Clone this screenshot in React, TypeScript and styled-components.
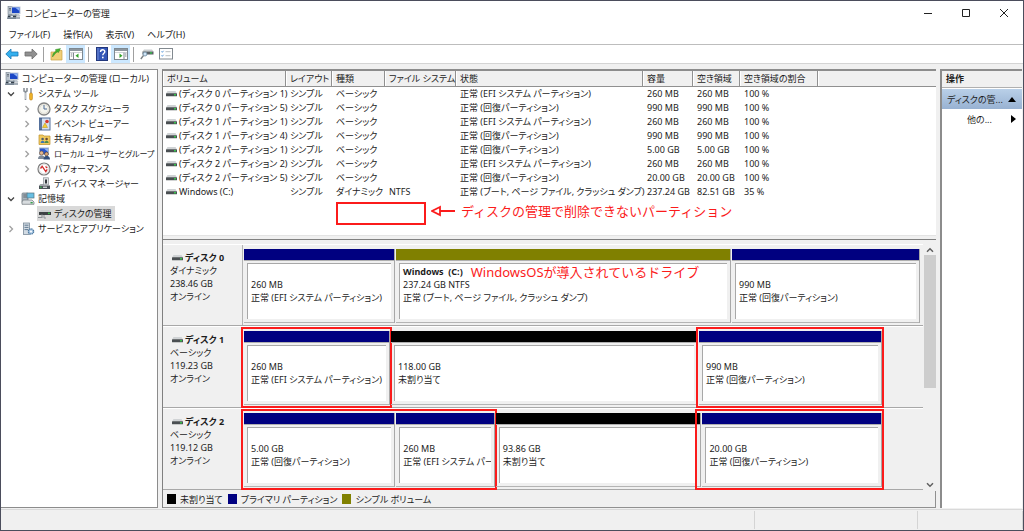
import React from "react";
import styled, { createGlobalStyle, css } from "styled-components";

const GlobalStyle = createGlobalStyle`
  *, *::before, *::after { box-sizing: border-box; }
  body {
    margin: 0;
    background: #f0f0f0;
    color: #1c1c1c;
    font-family: "Noto Sans", "Noto Sans CJK JP", sans-serif;
    font-size: 9px;
    line-height: 13px;
    font-feature-settings: "palt", "kern";
  }
  button { font: inherit; font-feature-settings: inherit; color: inherit; background: none; border: 0; padding: 0; margin: 0; }
  svg { display: block; flex: none; }
`;

/* ---------- window frame ---------- */

const Window = styled.main`
  min-height: 100vh;
  display: flex;
  flex-direction: column;
  border: 1px solid #4b4d5c;
  background: #f0f0f0;
`;

const TitleBar = styled.header`
  display: flex;
  align-items: center;
  gap: 4px;
  height: 24px;
  padding-left: 6px;
  background: #fff;
`;

const Title = styled.h1`
  flex: 1;
  margin: 0;
  font-size: 9px;
  font-weight: 400;
`;

const CaptionButton = styled.button`
  width: 38px;
  height: 24px;
  display: grid;
  place-items: center;
`;

const CaptionGroup = styled.div`
  display: flex;
`;

const MenuBar = styled.nav`
  display: flex;
  align-items: center;
  gap: 13px;
  height: 20px;
  padding-left: 8px;
  background: #fff;
  border-bottom: 1px solid #bdbdbd;
`;

const Toolbar = styled.div`
  display: flex;
  align-items: center;
  height: 19px;
  padding-left: 1px;
  background: #fff;
  border-bottom: 1px solid #d4d4d4;
`;

const ToolButton = styled.button<{ $active?: boolean }>`
  width: 19px;
  height: 18px;
  display: grid;
  place-items: center;
  background: ${(p) => (p.$active ? "#cce8ff" : "transparent")};
`;

const ToolSeparator = styled.span`
  width: 1px;
  height: 15px;
  margin: 0 3px;
  background: #a0a0a0;
`;

const Body = styled.div`
  flex: 1;
  display: grid;
  grid-template-columns: 157px minmax(0, 1fr) 82px;
  column-gap: 4px;
  padding: 5px 1px 0 0;
`;

const StatusBar = styled.footer`
  display: flex;
  height: 21px;
  margin-top: 1px;
  border-top: 1px solid #d9d9d9;
`;

const StatusCell = styled.span<{ $width?: number }>`
  flex: ${(p) => (p.$width ? `0 0 ${p.$width}px` : "1")};
  margin: 1px 0;
  border-right: 1px solid #d4d4d4;
`;

/* ---------- tree ---------- */

const TreePanel = styled.aside`
  background: #fff;
  border: solid #8c8c8c;
  border-width: 1px 1px 1px 0;
  padding-top: 1px;
`;

const TreeList = styled.ul`
  margin: 0;
  padding: 0;
  list-style: none;
`;

const TreeRow = styled.li<{ $level: number }>`
  display: flex;
  align-items: center;
  height: 15px;
  padding-left: ${(p) => (p.$level === 0 ? 4 : (p.$level - 1) * 16 + 4)}px;
  white-space: nowrap;
`;

const Toggle = styled.button`
  flex: none;
  width: 16px;
  height: 15px;
  display: flex;
  align-items: center;
  padding-left: 2px;
`;

const TreeLabel = styled.span<{ $selected?: boolean; $compact?: boolean }>`
  display: flex;
  align-items: center;
  gap: 3px;
  height: 15px;
  padding-right: 3px;
  font-size: ${(p) => (p.$compact ? 8 : 9)}px;
  background: ${(p) => (p.$selected ? "#d9d9d9" : "transparent")};
`;

const IconSlot = styled.span`
  flex: none;
  width: 14px;
  display: grid;
  place-items: center;
`;

/* ---------- volume list ---------- */

const Center = styled.section`
  display: flex;
  flex-direction: column;
  border-left: 1px solid #808080;
  border-top: 2px solid #8c8c8c;
  min-width: 0;
`;

const VolumePane = styled.div`
  flex: 1;
  background: #fff;
  border-bottom: 1px solid #e3e3e3;
`;

const Splitter = styled.div`
  height: 4px;
  border-bottom: 1px solid #808080;
`;

const VolumeTable = styled.table`
  width: 100%;
  table-layout: fixed;
  border-collapse: separate;
  border-spacing: 0;
`;

const Th = styled.th`
  height: 16px;
  padding: 0 0 0 4px;
  background: #f0f0f0;
  border-right: 1px solid #909090;
  border-bottom: 1px solid #909090;
  box-shadow: inset 1px 0 #fff;
  font-weight: 400;
  text-align: left;
  white-space: nowrap;
  &:last-child { border-right: 0; }
`;

const Td = styled.td`
  height: 14px;
  padding: 0 0 0 4px;
  line-height: 14px;
  white-space: nowrap;
  &:first-child { padding-left: 3px; }
`;

const VolumeName = styled.span`
  display: flex;
  align-items: center;
  gap: 2px;
`;

const NoteRow = styled.div`
  display: flex;
  align-items: flex-start;
  gap: 5px;
  padding: 3px 0 0 173px;
`;

const noteText = css`
  color: #fb1b1b;
  font-size: 13px;
  line-height: 18px;
  font-weight: 400;
  font-feature-settings: normal;
  white-space: nowrap;
`;

const Note = styled.span`
  ${noteText}
`;

const EmptyMark = styled.span`
  width: 90px;
  height: 23px;
  border: 2px solid #fb1b1b;
`;

/* ---------- disk map ---------- */

const DiskPane = styled.div`
  display: flex;
  padding: 4px 0 1px;
`;

const DiskList = styled.div`
  flex: 1;
  min-width: 0;
`;

const DiskRow = styled.div`
  display: flex;
  height: 82px;
  border-top: 1px solid #fff;
  border-bottom: 1px solid #a8a8a8;
`;

const DiskInfo = styled.div`
  width: 80px;
  padding: 6px 0 0 7px;
  border-right: 1px solid #b4b4b4;
`;

const DiskName = styled.div`
  display: flex;
  align-items: center;
  gap: 2px;
  height: 13px;
  padding-left: 2px;
  font-weight: 700;
`;

const Partitions = styled.div<{ $tail?: boolean }>`
  flex: 1;
  display: flex;
  gap: 2px;
  min-width: 0;
  padding: 4px ${(p) => (p.$tail ? 42 : 4)}px 2px 1px;
`;

const PartitionGroup = styled.div<{ $grow: number }>`
  position: relative;
  flex: ${(p) => p.$grow} 1 0;
  display: flex;
  gap: 2px;
  min-width: 0;
`;

const Mark = styled.span<{ $reach: number }>`
  position: absolute;
  inset: -4px -3px -3px -${(p) => p.$reach}px;
  border: 2px solid #fb1b1b;
  pointer-events: none;
`;

const PartitionBox = styled.div<{ $grow: number }>`
  flex: ${(p) => p.$grow} 1 0;
  display: flex;
  flex-direction: column;
  gap: 2px;
  min-width: 0;
  border-bottom: 1px solid #b4b4b4;
  box-shadow: 1px 0 #a8a8a8;
  padding-bottom: 3px;
`;

const PartitionBar = styled.div<{ $color: string }>`
  height: 12px;
  background: ${(p) => p.$color};
  border-bottom: 1px solid #b0b0b0;
`;

const PartitionBody = styled.div`
  flex: 1;
  margin: 0 3px;
  padding: 1px 0 0 3px;
  background: #fff;
  border-top: 1px solid #a8a8a8;
  border-left: 1px solid #a8a8a8;
  overflow: hidden;
  white-space: nowrap;
`;

const PartitionName = styled.div`
  display: flex;
  align-items: center;
  gap: 8px;
  height: 13px;
  font-weight: 700;
  white-space: pre;
`;

const ScrollBar = styled.div`
  width: 13px;
  display: flex;
  flex-direction: column;
  align-items: center;
`;

const ScrollButton = styled.button`
  width: 12px;
  height: 11px;
  display: grid;
  place-items: center;
`;

const ScrollThumb = styled.div`
  width: 12px;
  height: 54%;
  margin-bottom: auto;
  background: #cdcdcd;
`;

const Legend = styled.div`
  display: flex;
  align-items: center;
  gap: 5px;
  height: 17px;
  padding-left: 4px;
  border-right: 1px solid #909090;
  border-bottom: 1px solid #909090;
`;

const LegendItem = styled.span`
  display: flex;
  align-items: center;
  gap: 4px;
`;

const Swatch = styled.span<{ $color: string }>`
  width: 9px;
  height: 10px;
  background: ${(p) => p.$color};
`;

/* ---------- actions ---------- */

const ActionPanel = styled.aside`
  background: #fff;
  border-left: 2px solid #8c8c8c;
  border-top: 2px solid #8c8c8c;
`;

const ActionHeading = styled.h2`
  margin: 0 0 1px;
  height: 17px;
  padding-left: 4px;
  background: #f0f0f0;
  border-bottom: 1px solid #b0b0b0;
  font-size: 9px;
  line-height: 16px;
  font-weight: 700;
`;

const ActionButton = styled.button<{ $main?: boolean }>`
  width: 100%;
  height: 20px;
  display: flex;
  align-items: center;
  justify-content: space-between;
  padding: 0 6px 0 ${(p) => (p.$main ? 5 : 25)}px;
  background: ${(p) => (p.$main ? "linear-gradient(#b9d0e8, #98b2d2)" : "transparent")};
`;

/* ---------- icons ---------- */

const ComputerIcon = () => (
  <svg width="14" height="14" viewBox="0 0 14 14">
    <rect x="1" y="0.5" width="4" height="8" fill="#b9c2cc" stroke="#77828e" strokeWidth=".6" />
    <path d="M2 2.5h2M2 4h2" stroke="#48525d" strokeWidth=".7" />
    <rect x="4.5" y="1" width="8.5" height="6.5" fill="#1c47c6" stroke="#c3ccd8" />
    <path d="M8 1.5h4.5V5z" fill="#8fb4f4" />
    <path d="M8 8h4l1.500 2H8z" fill="#c0c8d0" />
    <path d="M1 8.500h8.500v4.500H0z" fill="#7a8794" />
    <path d="M1 10.500h8" stroke="#2d3742" strokeWidth=".9" />
    <path d="M9 10.500h4v2.500H9z" fill="#a4adb6" />
    <path d="M3.500 9.800h2.500v1.500H3.500z" fill="#e5edf3" />
  </svg>
);

const DriveIcon = () => (
  <svg width="11" height="6" viewBox="0 0 11 6">
    <path d="M1.500 0h8l1.500 2.500H0z" fill="#d0d3d5" />
    <rect y="2.2" width="11" height="3" rx=".5" fill="#4a4f52" />
    <rect x="8" y="3" width="2" height="1.500" fill="#37c24b" />
  </svg>
);

const ToolsIcon = () => (
  <svg width="12" height="14" viewBox="0 0 12 14">
    <path d="M2 1v3l1.5 1L5 4V1M3.5 5v8" fill="none" stroke="#8b9299" strokeWidth="1.6" />
    <path d="M3.5 6v6" stroke="#dfe3e6" strokeWidth=".6" />
    <path d="M9 1v5" stroke="#6f777e" strokeWidth="1.2" />
    <rect x="7.6" y="6" width="2.8" height="7" rx="1.2" fill="#f0b429" stroke="#b87c12" strokeWidth=".6" />
  </svg>
);

const ClockIcon = () => (
  <svg width="14" height="14" viewBox="0 0 14 14">
    <circle cx="7" cy="7" r="6" fill="#f4f4ee" stroke="#858585" strokeWidth="1.3" />
    <circle cx="7" cy="7" r="4.4" fill="none" stroke="#d4d0c4" strokeWidth=".6" />
    <path d="M7 3v4h3" fill="none" stroke="#4c6a94" strokeWidth="1" />
  </svg>
);

const EventIcon = () => (
  <svg width="13" height="14" viewBox="0 0 13 14">
    <rect x="1.5" y="1" width="10.5" height="12" fill="#d5e0f0" stroke="#54709c" />
    <path d="M3 1v12" stroke="#2f4a78" strokeWidth="1.4" />
    <path d="M4.5 10.500 7 6l2.5 4.5z" fill="#f8cf32" stroke="#b98e11" strokeWidth=".5" />
    <circle cx="9" cy="4.500" r="1.8" fill="#d8372b" />
  </svg>
);

const SharedIcon = () => (
  <svg width="13" height="12" viewBox="0 0 13 12">
    <path d="M1 2h4l1 1h6v8.5H1z" fill="#f0ca5e" stroke="#bb8f2c" strokeWidth=".7" />
    <circle cx="4.6" cy="6" r="1.3" fill="#4c5c6e" />
    <path d="M2.6 10c0-3 4-3 4 0z" fill="#3f78b4" />
    <circle cx="8.6" cy="6" r="1.3" fill="#6b4b32" />
    <path d="M6.6 10c0-3 4-3 4 0z" fill="#4d8b4f" />
  </svg>
);

const UsersIcon = () => (
  <svg width="14" height="13" viewBox="0 0 14 13">
    <rect x="2.5" y="1" width="9" height="6.5" fill="#2855cb" stroke="#aab6c6" />
    <path d="M7 1.5h4V5z" fill="#8fb4f4" />
    <circle cx="4.5" cy="6" r="2" fill="#e4b88d" stroke="#5a4030" strokeWidth=".5" />
    <path d="M1 12c0-5 7-5 7 0z" fill="#7d8998" />
    <circle cx="9.5" cy="7" r="1.9" fill="#dca878" stroke="#37271d" strokeWidth=".5" />
    <path d="M6.5 12.6c0-5 6.5-5 6.5 0z" fill="#34507b" />
  </svg>
);

const PerformanceIcon = () => (
  <svg width="14" height="14" viewBox="0 0 14 14">
    <circle cx="7" cy="7" r="6" fill="#fff" stroke="#7c7c7c" strokeWidth="1.2" />
    <circle cx="7" cy="7" r="4.7" fill="none" stroke="#d3d3d3" strokeWidth=".7" />
    <path d="M3.500 6.500 5.200 4.300 8.800 9.500l1.400-2.200M8.500 4.500l1.800 1.500" fill="none" stroke="#d42a2a" strokeWidth="1.3" />
  </svg>
);

const DeviceIcon = () => (
  <svg width="13" height="13" viewBox="0 0 13 13">
    <rect x="5.5" y=".8" width="5" height="7" fill="#e1e4e6" stroke="#8a9095" strokeWidth=".7" />
    <rect x="7" y="2.5" width="2" height="4" fill="#34393d" />
    <path d="M1 8.5h11v3.5H1z" fill="#4c5358" />
    <path d="M1 8.5 2.5 7H5v1.5z" fill="#9ba2a7" />
    <rect x="5" y="9.6" width="4" height="1.3" fill="#d9dcde" />
    <rect x="2" y="9.6" width="1.6" height="1.2" fill="#37c24b" />
  </svg>
);

const StorageIcon = () => (
  <svg width="14" height="13" viewBox="0 0 14 13">
    <rect x="1" y="1" width="6" height="10" rx="1" fill="#a9b4bd" stroke="#69747d" strokeWidth=".7" />
    <path d="M2.3 3h3.4M2.3 5h3.4" stroke="#4c565e" strokeWidth=".8" />
    <rect x="6" y="1" width="7" height="5" fill="#68bfe3" stroke="#54727f" strokeWidth=".7" />
    <path d="M2 8h9l2 2v2.3H1V10z" fill="#d8dcdf" stroke="#6f767b" strokeWidth=".7" />
    <rect x="9.5" y="10" width="2.2" height="1.4" fill="#37a24b" />
  </svg>
);

const DiskManageIcon = () => (
  <svg width="13" height="10" viewBox="0 0 13 10">
    <path d="M3 1h8l2 2H1z" fill="#c9cdcf" />
    <rect x="1" y="3" width="12" height="3" fill="#3c4144" />
    <rect x="10" y="3.6" width="1.8" height="1.5" fill="#37c24b" />
    <path d="M0 8.5h4V5.5" fill="none" stroke="#8b9196" strokeWidth="1.2" />
    <path d="M6 6v3h2" fill="none" stroke="#8b9196" strokeWidth="1" />
  </svg>
);

const ServicesIcon = () => (
  <svg width="13" height="14" viewBox="0 0 13 14">
    <rect x="1.5" y="1" width="6" height="11.5" fill="#d2dbe3" stroke="#7a8b9a" strokeWidth=".8" />
    <path d="M2.5 3.2h4M2.5 5.4h4M2.5 7.6h4" stroke="#58728a" strokeWidth=".9" />
    <circle cx="9" cy="9.5" r="2.7" fill="#a5c4e2" stroke="#4b789f" strokeWidth="1.2" strokeDasharray="1.4 .7" />
    <circle cx="9" cy="9.5" r="1" fill="#fff" />
  </svg>
);

const Arrow = ({ back }: { back?: boolean }) => (
  <svg width="14" height="12" viewBox="0 0 14 12">
    <path
      d={back ? "M.8 6 6 1v3h7v4H6v3z" : "M13.2 6 8 1v3H1v4h7v3z"}
      fill={back ? "#35b0ee" : "#909090"}
      stroke={back ? "#1978b8" : "#6c6c6c"}
      strokeWidth=".8"
    />
  </svg>
);

const FolderUpIcon = () => (
  <svg width="13" height="14" viewBox="0 0 13 14">
    <path d="M1 5h4l1-1.500h6V13H1z" fill="#f1cf78" stroke="#c9a043" strokeWidth=".7" />
    <path d="M2.500 10c0-3 1-5 3.500-5.500L5.500 2.500l5-1-2 4L7.300 5C5 6 4.500 8 2.500 10z" fill="#47b430" stroke="#2c7d1c" strokeWidth=".4" />
  </svg>
);

const PaneIcon = ({ right }: { right?: boolean }) => (
  <svg width="14" height="12" viewBox="0 0 14 12">
    <rect x=".5" y=".5" width="13" height="11" fill="#fff" stroke="#7e8890" />
    <path d="M1 1h12v2H1z" fill="#8d979f" />
    <path d={right ? "M10 4v7" : "M4.500 4v7"} stroke="#7e8890" />
    <path d="M1 4.500h12" stroke="#c3c9ce" strokeWidth=".8" />
    <path d={right ? "M11 6h1.500M11 8h1.500" : "M1.800 6h1.500M1.800 8h1.500"} stroke="#55606a" strokeWidth=".8" />
    <path d={right ? "M5.500 5.500v4.500L8.500 7.700z" : "M9.500 5.500v4.500L6.500 7.700z"} fill="#33a42b" />
  </svg>
);

const HelpIcon = () => (
  <svg width="12" height="14" viewBox="0 0 12 14">
    <rect x=".5" y=".5" width="11" height="13" fill="#3457b8" stroke="#22377c" />
    <path d="M2 1v12" stroke="#8fa6e0" strokeWidth=".7" />
    <path d="M4.500 5c0-3 4.300-2.800 4.300-.3 0 1.700-2 1.600-2 3.600" fill="none" stroke="#fff" strokeWidth="1.400" />
    <rect x="6" y="9.700" width="1.600" height="1.600" fill="#fff" />
  </svg>
);

const RefreshDiskIcon = () => (
  <svg width="14" height="12" viewBox="0 0 14 12">
    <path d="M4 1.500h8l1.500 2H2.500z" fill="#c9cdcf" />
    <rect x="2.500" y="3.500" width="11" height="3" fill="#5a6165" />
    <rect x="10" y="4.200" width="2" height="1.400" fill="#37c24b" />
    <circle cx="5" cy="6" r="2" fill="#cfe4f5" stroke="#6b8aa3" strokeWidth=".8" />
    <path d="M3.500 7.500.8 11" stroke="#7b8186" strokeWidth="1.400" />
  </svg>
);

const ListIcon = () => (
  <svg width="14" height="12" viewBox="0 0 14 12">
    <rect x=".5" y=".5" width="13" height="10.500" fill="#fff" stroke="#82898f" />
    <path d="M2.500 3.500l.8.8L4.500 2.800M2.500 7.500l.8.8 1.200-1.500" fill="none" stroke="#2f7fd0" strokeWidth=".8" />
    <path d="M6.500 3.700h5M6.500 7.700h5" stroke="#b0b5b9" strokeWidth=".9" />
  </svg>
);

const Chevron = ({ open }: { open?: boolean }) => (
  <svg width="8" height="8" viewBox="0 0 8 8">
    <path d={open ? "M1 2.500 4 5.500 7 2.500" : "M2.500 1 5.500 4 2.500 7"} fill="none" stroke={open ? "#444" : "#a0a0a0"} strokeWidth="1.300" />
  </svg>
);

const ScrollArrow = ({ down }: { down?: boolean }) => (
  <svg width="8" height="6" viewBox="0 0 8 6">
    <path d={down ? "M1 1.200 4 4.200 7 1.200" : "M1 4.800 4 1.800 7 4.800"} fill="none" stroke="#606060" strokeWidth="1.500" />
  </svg>
);

/* ---------- data ---------- */

type TreeItem = {
  level: number;
  label: string;
  icon: React.ReactNode;
  open?: boolean;
  closed?: boolean;
  selected?: boolean;
  compact?: boolean;
};

const tree: TreeItem[] = [
  { level: 0, label: "コンピューターの管理 (ローカル)", icon: <ComputerIcon /> },
  { level: 1, label: "システム ツール", icon: <ToolsIcon />, open: true },
  { level: 2, label: "タスク スケジューラ", icon: <ClockIcon />, closed: true },
  { level: 2, label: "イベント ビューアー", icon: <EventIcon />, closed: true },
  { level: 2, label: "共有フォルダー", icon: <SharedIcon />, closed: true },
  { level: 2, label: "ローカル ユーザーとグループ", icon: <UsersIcon />, closed: true, compact: true },
  { level: 2, label: "パフォーマンス", icon: <PerformanceIcon />, closed: true },
  { level: 2, label: "デバイス マネージャー", icon: <DeviceIcon /> },
  { level: 1, label: "記憶域", icon: <StorageIcon />, open: true },
  { level: 2, label: "ディスクの管理", icon: <DiskManageIcon />, selected: true },
  { level: 1, label: "サービスとアプリケーション", icon: <ServicesIcon />, closed: true },
];

const columns = [
  { label: "ボリューム", width: 123 },
  { label: "レイアウト", width: 46 },
  { label: "種類", width: 53 },
  { label: "ファイル システム", width: 71 },
  { label: "状態", width: 187 },
  { label: "容量", width: 50 },
  { label: "空き領域", width: 47 },
  { label: "空き領域の割合", width: 78 },
];

const EFI = "正常 (EFI システム パーティション)";
const EFI_SHORT = "正常 (EFI システム パー";
const RECOVERY = "正常 (回復パーティション)";
const BOOT = "正常 (ブート, ページ ファイル, クラッシュ ダンプ)";

const volumes = [
  ["(ディスク 0 パーティション 1)", "シンプル", "ベーシック", "", EFI, "260 MB", "260 MB", "100 %"],
  ["(ディスク 0 パーティション 5)", "シンプル", "ベーシック", "", RECOVERY, "990 MB", "990 MB", "100 %"],
  ["(ディスク 1 パーティション 1)", "シンプル", "ベーシック", "", EFI, "260 MB", "260 MB", "100 %"],
  ["(ディスク 1 パーティション 4)", "シンプル", "ベーシック", "", RECOVERY, "990 MB", "990 MB", "100 %"],
  ["(ディスク 2 パーティション 1)", "シンプル", "ベーシック", "", RECOVERY, "5.00 GB", "5.00 GB", "100 %"],
  ["(ディスク 2 パーティション 2)", "シンプル", "ベーシック", "", EFI, "260 MB", "260 MB", "100 %"],
  ["(ディスク 2 パーティション 5)", "シンプル", "ベーシック", "", RECOVERY, "20.00 GB", "20.00 GB", "100 %"],
  ["Windows (C:)", "シンプル", "ダイナミック", "NTFS", BOOT, "237.24 GB", "82.51 GB", "35 %"],
];

const NAVY = "#000080";
const OLIVE = "#808000";
const BLACK = "#000000";

type PartitionData = { grow: number; color: string; size: string; status: string; name?: string; note?: string };
type Group = { mark?: number; parts: PartitionData[] };
type Disk = { name: string; type: string; size: string; tail?: boolean; groups: Group[] };

const disks: Disk[] = [
  {
    name: "ディスク 0",
    type: "ダイナミック",
    size: "238.46 GB",
    groups: [
      { parts: [{ grow: 150, color: NAVY, size: "260 MB", status: EFI }] },
      {
        parts: [
          { grow: 334, color: OLIVE, size: "237.24 GB NTFS", status: BOOT, name: "Windows  (C:)", note: "WindowsOSが導入されているドライブ" },
        ],
      },
      { parts: [{ grow: 187, color: NAVY, size: "990 MB", status: RECOVERY }] },
    ],
  },
  {
    name: "ディスク 1",
    type: "ベーシック",
    size: "119.23 GB",
    tail: true,
    groups: [
      { mark: 3, parts: [{ grow: 145, color: NAVY, size: "260 MB", status: EFI }] },
      { parts: [{ grow: 306, color: BLACK, size: "118.00 GB", status: "未割り当て" }] },
      { mark: 3, parts: [{ grow: 182, color: NAVY, size: "990 MB", status: RECOVERY }] },
    ],
  },
  {
    name: "ディスク 2",
    type: "ベーシック",
    size: "119.12 GB",
    tail: true,
    groups: [
      {
        mark: 3,
        parts: [
          { grow: 151, color: NAVY, size: "5.00 GB", status: RECOVERY },
          { grow: 98, color: NAVY, size: "260 MB", status: EFI_SHORT },
        ],
      },
      { parts: [{ grow: 204, color: BLACK, size: "93.86 GB", status: "未割り当て" }] },
      { mark: 7, parts: [{ grow: 178, color: NAVY, size: "20.00 GB", status: RECOVERY }] },
    ],
  },
];

const Partition = ({ data }: { data: PartitionData }) => (
  <PartitionBox $grow={data.grow}>
    <PartitionBar $color={data.color} />
    <PartitionBody>
      <PartitionName>
        {data.name}
        {data.note && <Note>{data.note}</Note>}
      </PartitionName>
      <div>{data.size}</div>
      <div>{data.status}</div>
    </PartitionBody>
  </PartitionBox>
);

const CaptionButtons = () => (
  <CaptionGroup>
    <CaptionButton aria-label="最小化">
      <svg width="10" height="10" viewBox="0 0 10 10"><path d="M1 5.500h8" stroke="#222" /></svg>
    </CaptionButton>
    <CaptionButton aria-label="最大化">
      <svg width="10" height="10" viewBox="0 0 10 10"><path d="M1.500 1.500h7v7h-7z" fill="none" stroke="#222" /></svg>
    </CaptionButton>
    <CaptionButton aria-label="閉じる">
      <svg width="10" height="10" viewBox="0 0 10 10"><path d="M1 1l8 8M9 1 1 9" stroke="#222" /></svg>
    </CaptionButton>
  </CaptionGroup>
);

export default function App() {
  return (
    <Window lang="ja">
      <GlobalStyle />
      <TitleBar>
        <ComputerIcon />
        <Title>コンピューターの管理</Title>
        <CaptionButtons />
      </TitleBar>
      <MenuBar>
        {["ファイル(F)", "操作(A)", "表示(V)", "ヘルプ(H)"].map((m) => (
          <button key={m}>{m}</button>
        ))}
      </MenuBar>
      <Toolbar>
        <ToolButton aria-label="戻る"><Arrow back /></ToolButton>
        <ToolButton aria-label="進む"><Arrow /></ToolButton>
        <ToolSeparator />
        <ToolButton aria-label="上へ"><FolderUpIcon /></ToolButton>
        <ToolButton $active aria-label="ツリーの表示"><PaneIcon /></ToolButton>
        <ToolSeparator />
        <ToolButton aria-label="ヘルプ"><HelpIcon /></ToolButton>
        <ToolButton $active aria-label="操作の表示"><PaneIcon right /></ToolButton>
        <ToolSeparator />
        <ToolButton aria-label="再スキャン"><RefreshDiskIcon /></ToolButton>
        <ToolButton aria-label="一覧"><ListIcon /></ToolButton>
      </Toolbar>
      <Body>
        <TreePanel>
          <TreeList>
            {tree.map((item) => (
              <TreeRow key={item.label} $level={item.level}>
                {item.level > 0 && (
                  <Toggle aria-label={item.label}>{(item.open || item.closed) && <Chevron open={item.open} />}</Toggle>
                )}
                <TreeLabel $selected={item.selected} $compact={item.compact}>
                  <IconSlot>{item.icon}</IconSlot>
                  {item.label}
                </TreeLabel>
              </TreeRow>
            ))}
          </TreeList>
        </TreePanel>

        <Center>
          <VolumePane>
            <VolumeTable>
              <colgroup>
                {columns.map((c) => (
                  <col key={c.label} width={c.width} />
                ))}
                <col />
              </colgroup>
              <thead>
                <tr>
                  {columns.map((c) => (
                    <Th key={c.label}>{c.label}</Th>
                  ))}
                  <Th as="td" />
                </tr>
              </thead>
              <tbody>
                {volumes.map((row) => (
                  <tr key={row[0]}>
                    {row.map((cell, i) => (
                      <Td key={i}>
                        {i === 0 ? (
                          <VolumeName>
                            <DriveIcon />
                            {cell}
                          </VolumeName>
                        ) : (
                          cell
                        )}
                      </Td>
                    ))}
                    <Td />
                  </tr>
                ))}
              </tbody>
            </VolumeTable>
            <NoteRow>
              <EmptyMark />
              <svg width="25" height="18" viewBox="0 0 25 18">
                <path d="M9 5 1 9l8 4zM9 9h15" fill="none" stroke="#fb1b1b" strokeWidth="1.800" />
              </svg>
              <Note>ディスクの管理で削除できないパーティション</Note>
            </NoteRow>
          </VolumePane>
          <Splitter />
          <DiskPane>
            <DiskList>
              {disks.map((disk) => (
                <DiskRow key={disk.name}>
                  <DiskInfo>
                    <DiskName>
                      <DriveIcon />
                      {disk.name}
                    </DiskName>
                    <div>{disk.type}</div>
                    <div>{disk.size}</div>
                    <div>オンライン</div>
                  </DiskInfo>
                  <Partitions $tail={disk.tail}>
                    {disk.groups.map((group, i) => (
                      <PartitionGroup key={i} $grow={group.parts.reduce((sum, p) => sum + p.grow, 0)}>
                        {group.parts.map((p) => (
                          <Partition key={p.size} data={p} />
                        ))}
                        {group.mark && <Mark $reach={group.mark} />}
                      </PartitionGroup>
                    ))}
                  </Partitions>
                </DiskRow>
              ))}
            </DiskList>
            <ScrollBar>
              <ScrollButton aria-label="上へスクロール"><ScrollArrow /></ScrollButton>
              <ScrollThumb />
              <ScrollButton aria-label="下へスクロール"><ScrollArrow down /></ScrollButton>
            </ScrollBar>
          </DiskPane>
          <Legend>
            <LegendItem><Swatch $color={BLACK} />未割り当て</LegendItem>
            <LegendItem><Swatch $color={NAVY} />プライマリ パーティション</LegendItem>
            <LegendItem><Swatch $color={OLIVE} />シンプル ボリューム</LegendItem>
          </Legend>
        </Center>

        <ActionPanel>
          <ActionHeading>操作</ActionHeading>
          <ActionButton $main>
            ディスクの管...
            <svg width="8" height="5" viewBox="0 0 8 5"><path d="M0 5 4 0l4 5z" fill="#000" /></svg>
          </ActionButton>
          <ActionButton>
            他の...
            <svg width="5" height="8" viewBox="0 0 5 8"><path d="M0 0l5 4-5 4z" fill="#000" /></svg>
          </ActionButton>
        </ActionPanel>
      </Body>
      <StatusBar>
        <StatusCell />
        <StatusCell $width={163} />
        <StatusCell $width={105} />
      </StatusBar>
    </Window>
  );
}
